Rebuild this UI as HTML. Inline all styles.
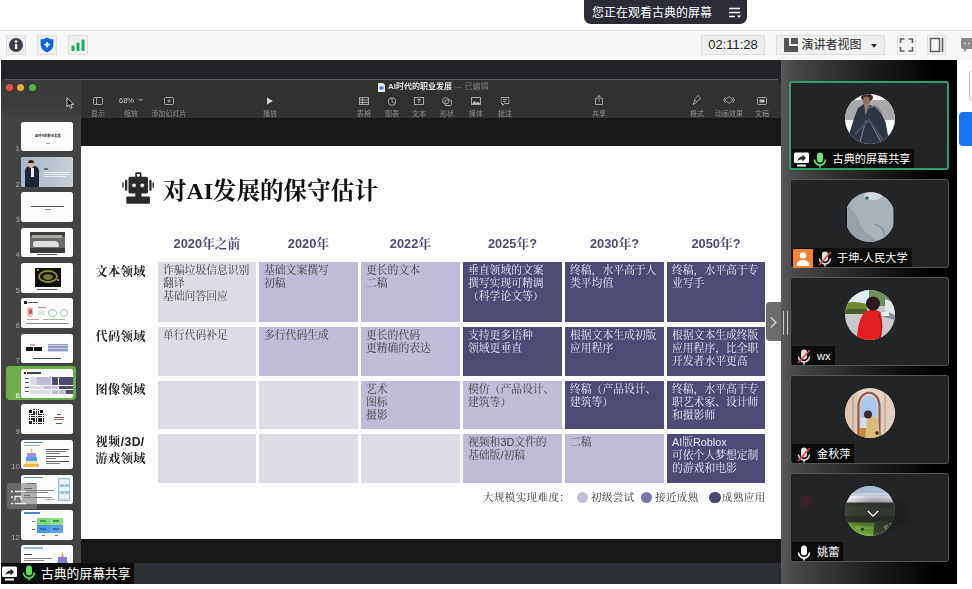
<!DOCTYPE html>
<html lang="zh">
<head>
<meta charset="utf-8">
<title>会议</title>
<style>
*{box-sizing:border-box;margin:0;padding:0}
html,body{width:972px;height:589px;overflow:hidden;background:#fff}
body{position:relative;font-family:"Liberation Sans","Noto Sans CJK SC",sans-serif;color:#222}
.abs{position:absolute}
/* top */
#pill{left:584px;top:0;width:163px;height:24px;background:#2b2c37;border-radius:0 0 7px 7px;color:#fff;font-size:12px;line-height:27px;padding-left:8px;white-space:nowrap}
#bar{left:0;top:30px;width:972px;height:30px;background:#f8f8f8;border-top:1px solid #dcdcdc}
.tbtn{position:absolute;top:35px;height:20px;background:#f0f0f0;border:1px solid #dedede}
/* main dark */
#dark{left:1px;top:60px;width:956px;height:524px;background:#222326}
#rpanel{left:781px;top:60px;width:176px;height:524px;background:linear-gradient(90deg,#5a5858 0,#4a4949 8%,#363636 25%,#1b1b1b 55%,#000 88%)}
.tile{position:absolute;left:790px;width:159px;height:89px;background:#222426;border:1px solid #555;border-radius:3px}
.av{position:absolute;left:54px;top:12px;width:50px;height:50px;border-radius:50%;overflow:hidden}
.nm{position:absolute;left:1px;bottom:1px;height:19px;background:rgba(8,8,8,.85);color:#fff;font-size:11.150px;line-height:17px;white-space:nowrap;padding:2px 4px 0 2px;display:flex;align-items:center}
/* keynote */
#kn{left:1px;top:79px;width:780px;height:486px;background:#181818;border-radius:5px 5px 0 0;overflow:hidden}
#kntb{left:80px;top:0;width:700px;height:39px;background:#313130;border-top:1px solid #5c5c5c}
#side{left:0;top:0;width:80px;height:486px;background:#444343;box-shadow:inset 0 1px 0 #5a5a5a}
.th{position:absolute;left:20px;width:52px;height:29.500px;background:#fcfcfc;border-radius:2.500px;overflow:hidden}
.tn{position:absolute;left:0;width:19px;text-align:right;color:#c4c4c4;font-size:8px;line-height:9px;filter:blur(.3px)}
.ti{position:absolute;top:30px;color:#8d8d8d;font-size:7px;line-height:8px;white-space:nowrap;transform:translateX(-50%);filter:blur(.4px)}
.ic{position:absolute;top:17px;transform:translateX(-50%)}
#slide{left:80px;top:67px;width:700px;height:393px;background:#fdfdfd;overflow:hidden}
#slide>*{filter:blur(.35px)}
.kai{font-family:"Liberation Serif","Noto Serif CJK SC",serif}
.cell{position:absolute;font-family:"Liberation Sans","Noto Serif CJK SC",serif;font-size:10.800px;line-height:13.200px;padding:2px 0 0 5px;white-space:nowrap;color:#444;overflow:hidden}
.c0{background:#dcdce5}.c1{background:#d3d2e2}.c2{background:#bebcd6}.c3{background:#4d4b76;color:#e8e8f2}
.hd{position:absolute;width:99px;text-align:center;font:bold 12.800px/14px "Liberation Sans","Noto Serif CJK SC",sans-serif;color:#4c4a73;white-space:nowrap}
.rl{position:absolute;left:14.500px;letter-spacing:.4px;font-family:"Liberation Sans","Noto Serif CJK SC",serif;font-weight:700;font-size:12.200px;line-height:17px;color:#222;white-space:nowrap}
</style>
</head>
<body>
<!-- top pill -->
<div id="pill" class="abs">您正在观看古典的屏幕
<svg class="abs" style="left:145px;top:7px" width="14" height="12" viewBox="0 0 14 12"><path d="M0 1.5h11M0 5.5h11M0 9.5h6" stroke="#fff" stroke-width="1.4" fill="none"/><path d="M8 8.5h4l-2 2.6z" fill="#fff"/></svg>
</div>
<div id="bar" class="abs"></div>
<!-- left toolbar icons -->
<div class="tbtn" style="left:6px;width:20px"><svg width="18" height="18" viewBox="0 0 18 18"><circle cx="9" cy="9" r="7" fill="#3c4148"/><rect x="8" y="8" width="2.2" height="5" fill="#fff"/><circle cx="9.1" cy="5.6" r="1.3" fill="#fff"/></svg></div>
<div class="tbtn" style="left:37px;width:20px"><svg width="18" height="18" viewBox="0 0 18 18"><path d="M9 1.5c2 1.3 4.2 1.8 6.4 1.8v5.200c0 3.600-2.600 6.300-6.400 8c-3.800-1.700-6.400-4.400-6.400-8V3.300C4.800 3.300 7 2.800 9 1.500z" fill="#1466e0"/><path d="M9 6v5.400M6.300 8.700h5.400" stroke="#fff" stroke-width="1.700"/></svg></div>
<div class="tbtn" style="left:68px;width:20px"><svg width="18" height="18" viewBox="0 0 18 18"><rect x="2.500" y="9.500" width="3" height="5.500" rx="1" fill="#1faa63"/><rect x="7.500" y="6.500" width="3" height="8.500" rx="1" fill="#1faa63"/><rect x="12.500" y="3.500" width="3" height="11.500" rx="1" fill="#1faa63"/></svg></div>
<!-- right toolbar -->
<div class="tbtn" style="left:701px;width:64px;font-size:13px;line-height:18px;text-align:center;color:#222">02:11:28</div>
<div class="tbtn" style="left:776px;width:109px;font-size:12px;line-height:18px;color:#2a2a2a;padding-left:24.500px;white-space:nowrap">演讲者视图
<svg class="abs" style="left:7px;top:2px" width="14" height="14" viewBox="0 0 14 14"><path d="M0 0h5v8h9v6H0z" fill="#555"/><rect x="7" y="0" width="7" height="6" fill="#555"/></svg>
<svg class="abs" style="left:94px;top:7.500px" width="6" height="4" viewBox="0 0 6 4"><path d="M0 0h6L3 4z" fill="#333"/></svg>
</div>
<svg class="abs" style="left:897px;top:35px" width="19" height="20" viewBox="0 0 19 20"><rect x=".5" y=".5" width="18" height="19" fill="#f4f4f4" stroke="#e2e2e2"/><path d="M3.500 8V4h4M11.500 4h4v4M15.500 12v4h-4M7.500 16h-4v-4" stroke="#606060" stroke-width="1.600" fill="none"/></svg>
<svg class="abs" style="left:927px;top:35px" width="19" height="20" viewBox="0 0 19 20"><rect x=".5" y=".5" width="18" height="19" fill="#f4f4f4" stroke="#e2e2e2"/><rect x="3.500" y="3.500" width="9" height="13" fill="none" stroke="#606060" stroke-width="1.500"/><path d="M15.500 3v14" stroke="#606060" stroke-width="1.600"/></svg>
<svg class="abs" style="left:961px;top:38px" width="11" height="16" viewBox="0 0 11 16"><path d="M2 0h9v11H6l-3 3v-3H2a2 2 0 0 1-2-2V2a2 2 0 0 1 2-2z" fill="#8a8a8a"/><circle cx="4" cy="5.500" r="1" fill="#ddd"/><circle cx="8" cy="5.500" r="1" fill="#ddd"/></svg>
<div class="abs" style="left:969px;top:70px;width:8px;height:31px;border:1px solid #bbb;border-radius:4px;background:#fff"></div>
<div class="abs" style="left:959px;top:112px;width:20px;height:34px;border-radius:4px;background:#1a73f0"></div>

<div id="dark" class="abs"></div>
<div id="rpanel" class="abs"></div>
<div class="abs" style="left:783px;top:311px;width:1px;height:24px;background:#c9c3c3"></div><div class="abs" style="left:786.500px;top:311px;width:1px;height:24px;background:#c9c3c3"></div>
<div class="tile" style="top:81px;left:789px;width:160px;border:2px solid #2ca06a"><div class="av" style="left:54px;top:11px"><svg width="50" height="50" viewBox="0 0 50 50"><rect width="50" height="50" fill="#fafafa"/><rect y="6" width="50" height="20" fill="#a9a9ab"/><ellipse cx="22" cy="3.500" rx="6" ry="4" fill="#3d2c29"/><ellipse cx="21.500" cy="7" rx="3.400" ry="4.500" fill="#8b6f62"/><path d="M18 10h7l-2 15h-4z" fill="#8d8273"/><path d="M13 14l6-4 1.500 11 4-10 9 3 7 14 4 22H6l-1.500-11 5-16z" fill="#2e3441"/><path d="M24 14l6-2 7 8M21 26l-6 22M24 26l12 22" stroke="#707a88" stroke-width="1.200" fill="none"/><path d="M10 40l14-14 14 20" stroke="#4a5363" stroke-width="2" fill="none"/></svg></div><div class="nm" style="left:1px;bottom:0;height:19.500px;padding-top:2.500px"><svg width="15" height="15" viewBox="0 0 15 15" style="margin:0 4px 0 0"><rect x="0" y="0.500" width="15" height="10.500" rx="1.500" fill="#fff"/><rect x="3" y="12.500" width="9" height="2" rx=".5" fill="#fff"/><path d="M3.500 9c.5-3 2.500-4.500 5-4.500V2.500L12 6 8.500 9.500V7.500C6.500 7.500 5 7.800 3.500 9z" fill="#222"/></svg><svg width="14" height="16" viewBox="0 0 14 16" style="margin-right:5.500px"><rect x="4" y="0.500" width="6" height="10" rx="3" fill="#6fe27a"/><path d="M1.500 7.500a5.500 5.500 0 0 0 11 0" stroke="#6fe27a" stroke-width="1.600" fill="none"/><path d="M7 13v2.500" stroke="#6fe27a" stroke-width="1.600"/></svg>古典的屏幕共享</div></div>
<div class="tile" style="top:179px;border:1px solid #555"><div class="av" style="left:54px;top:12px"><svg width="50" height="50" viewBox="0 0 50 50"><rect width="50" height="50" fill="#17181a"/><rect x="2" y="0" width="46.500" height="50" fill="#a9b1b9"/><ellipse cx="28" cy="4" rx="9" ry="4" fill="#d5d8dc"/><path d="M2 14c8 4 10 12 14 20s10 10 18 16H2z" fill="#98a1aa"/><path d="M30 32c6 2 10 6 10 14" stroke="#8c959e" stroke-width="1.500" fill="none"/><circle cx="22" cy="6" r="1.800" fill="#2f6f78"/></svg></div><div class="nm" style="left:1px;bottom:0"><svg width="20" height="19" viewBox="0 0 20 19" style="margin:0 2px 0 -1px"><rect width="20" height="19" fill="#f08332"/><circle cx="10" cy="6.500" r="3.200" fill="#fff"/><path d="M3.500 17c0-4 3-6 6.500-6s6.500 2 6.500 6z" fill="#fff"/></svg><svg width="16" height="16" viewBox="0 0 16 16" style="margin:0 4px 0 2px"><rect x="5" y="0.500" width="6" height="10" rx="3" fill="#ddd"/><path d="M2.500 7.500a5.500 5.500 0 0 0 11 0" stroke="#ddd" stroke-width="1.500" fill="none"/><path d="M8 13v2.500" stroke="#ddd" stroke-width="1.500"/><path d="M14 1L2 14" stroke="#e0434d" stroke-width="1.600"/></svg>于坤-人民大学</div></div>
<div class="tile" style="top:277px;border:1px solid #555"><div class="av" style="left:54px;top:12px"><svg width="50" height="50" viewBox="0 0 50 50"><rect width="50" height="50" fill="#c9c9ce"/><rect width="26" height="16" fill="#dfeaf2"/><path d="M0 14c6-3 14-2 22 0v10H0z" fill="#6f8c34"/><path d="M0 19h22v5H0z" fill="#46602a"/><path d="M24 0h20c4 4 6 10 6 16H24z" fill="#6f8f5a"/><path d="M40 9l10 4v14H40z" fill="#e4e6ea"/><path d="M35 22c5-1 10 0 15 3v5c-5-1-10-3-15-4z" fill="#8c9096"/><path d="M36 22h8v4h-8z" fill="#e8e8ea"/><path d="M12 50c0-10 2-22 8-28 4-3 12-3 15 0 3 8 3 18 0 28z" fill="#e3201d"/><path d="M34 24c3 8 3 18 0 26" stroke="#b91512" stroke-width="1.500" fill="none"/><circle cx="28" cy="13.500" r="7" fill="#2b1a1b"/></svg></div><div class="nm" style="left:1px;bottom:0"><svg width="16" height="16" viewBox="0 0 16 16" style="margin:0 5px 0 2px"><rect x="5" y="0.500" width="6" height="10" rx="3" fill="#ddd"/><path d="M2.500 7.500a5.500 5.500 0 0 0 11 0" stroke="#ddd" stroke-width="1.500" fill="none"/><path d="M8 13v2.500" stroke="#ddd" stroke-width="1.500"/><path d="M14 1L2 14" stroke="#e0434d" stroke-width="1.600"/></svg>wx</div></div>
<div class="tile" style="top:375px;border:1px solid #555"><div class="av" style="left:54px;top:12px"><svg width="50" height="50" viewBox="0 0 50 50"><rect width="50" height="50" fill="#e6d5c9"/><path d="M0 0h13v50H0z" fill="#dcc6b8"/><path d="M36 0h14v50H36z" fill="#e2cfc2"/><path d="M13.500 50V19c0-19 21-19 21 0v31" stroke="#8d5a4c" stroke-width="2.200" fill="none"/><path d="M15.500 40V19c0-15 17-15 17 0v21z" fill="#a9c9ea"/><path d="M15.500 30h17v10h-17z" fill="#d3e2f0"/><path d="M40 4v44M8 8v40" stroke="#b99284" stroke-width="1"/><rect x="14" y="40" width="8" height="10" fill="#c48d3e"/><path d="M20 50l2-18c2-4 9-5 11 0l2 18z" fill="#d9bb7e"/><circle cx="23" cy="26.500" r="4" fill="#3c2b33"/><circle cx="32" cy="45" r="1.800" fill="#3a2a22"/></svg></div><div class="nm" style="left:1px;bottom:0"><svg width="16" height="16" viewBox="0 0 16 16" style="margin:0 5px 0 2px"><rect x="5" y="0.500" width="6" height="10" rx="3" fill="#ddd"/><path d="M2.500 7.500a5.500 5.500 0 0 0 11 0" stroke="#ddd" stroke-width="1.500" fill="none"/><path d="M8 13v2.500" stroke="#ddd" stroke-width="1.500"/><path d="M14 1L2 14" stroke="#e0434d" stroke-width="1.600"/></svg>金秋萍</div></div>
<div class="tile" style="top:473px;border:1px solid #555"><div class="av" style="left:54px;top:12px"><svg width="50" height="50" viewBox="0 0 50 50"><rect width="50" height="50" fill="#e9e9f0"/><rect width="50" height="7" fill="#a9b9d2"/><rect y="7" width="50" height="3" fill="#c9d2e2"/><rect y="16.500" width="50" height="20" fill="#3d433a"/><path d="M0 22c10-3 26-3 50 2v8H0z" fill="#4b5342"/><rect y="30" width="50" height="7" fill="#363c30"/><path d="M0 36.500h32l-3 13.500H6z" fill="#6dab3a"/><path d="M10 40h18v3H10z" fill="#8bc653"/><path d="M30 36c6-2 12 0 16 2l-6 12H28z" fill="#3d4a32"/><path d="M38 40l6-2-3 6z" fill="#8c9488"/><rect x="16" y="42" width="3" height="2.500" fill="#2f4a22"/></svg></div><div class="abs" style="left:46px;top:20px;width:80px;height:40px;background:radial-gradient(ellipse at center,rgba(20,20,20,.5) 0,rgba(20,20,20,.35) 45%,rgba(20,20,20,0) 72%)"></div><svg class="abs" style="left:75.500px;top:35.500px" width="12" height="8" viewBox="0 0 12 8"><path d="M.8 1l5.200 5.200L11.200 1" stroke="#fff" stroke-width="1.300" fill="none"/></svg><div class="abs" style="left:6px;top:18px;width:18px;height:18px;background:radial-gradient(circle,rgba(120,30,40,.45) 0,rgba(120,30,40,0) 70%)"></div><div class="nm" style="left:1px;bottom:0"><svg width="14" height="16" viewBox="0 0 14 16" style="margin:0 6px 0 3px"><rect x="4" y="0.500" width="6" height="10" rx="3" fill="#fff"/><path d="M1.500 7.500a5.500 5.500 0 0 0 11 0" stroke="#fff" stroke-width="1.600" fill="none"/><path d="M7 13v2.500" stroke="#fff" stroke-width="1.600"/></svg>姚蕾</div></div>
<div id="kn" class="abs">
<div id="side" class="abs"><div class="abs" style="left:0;top:1px;width:80px;height:38px;background:linear-gradient(#3a3a3a 0,#3c3c3c 70%,#444343 100%)"></div>
<div class="abs" style="left:5px;top:5px;width:7px;height:7px;border-radius:50%;background:#e8534e"></div><div class="abs" style="left:16px;top:5px;width:7px;height:7px;border-radius:50%;background:#e3ab3a"></div><div class="abs" style="left:28px;top:5px;width:7px;height:7px;border-radius:50%;background:#55b63f"></div>
<svg class="abs" style="left:65px;top:18px" width="9" height="12" viewBox="0 0 9 12"><path d="M1 .8v9l2.200-2 1.500 3.500 1.500-.700-1.500-3.300h3z" fill="#111" stroke="#eee" stroke-width=".8"/></svg>
<div class="th" style="top:42.8px"><div class="abs" style="left:13.5px;top:12px;font-size:10px;line-height:10px;white-space:nowrap;color:#222;font-weight:bold;transform:scale(0.32);transform-origin:0 0">AI时代的职业发展</div><div class="abs" style="left:25px;top:21px;width:4px;height:0.8px;background:#aaa"></div></div>
<div class="tn" style="top:65.4px;color:#aaa">1</div>
<div class="th" style="top:78.1px"><div class="abs" style="left:0px;top:0px;width:52px;height:30px;background:linear-gradient(90deg,#a7b7c7,#c9cfd6)"></div><div class="abs" style="left:4px;top:9px;width:14px;height:21px;background:#1f2636;border-radius:5px 5px 0 0"></div><div class="abs" style="left:9.5px;top:11px;width:3px;height:9px;background:#e8e8ee"></div><div class="abs" style="left:7px;top:3px;width:6px;height:7.5px;background:#d8b39a;border-radius:50%"></div><div class="abs" style="left:7px;top:2.5px;width:6px;height:3px;background:#2a2020;border-radius:3px 3px 0 0"></div><div class="abs" style="left:23px;top:11px;width:4px;height:1.5px;background:#5a6a7a"></div><div class="abs" style="left:23px;top:14.5px;width:25px;height:0.8px;background:#e6ebf0"></div><div class="abs" style="left:23px;top:16.5px;width:25px;height:0.8px;background:#e6ebf0"></div><div class="abs" style="left:23px;top:18.5px;width:22px;height:0.8px;background:#e6ebf0"></div></div>
<div class="tn" style="top:100.7px;color:#aaa">2</div>
<div class="th" style="top:113.4px"><div class="abs" style="left:10px;top:13.5px;width:33px;height:1.3px;background:#555"></div><div class="abs" style="left:23.5px;top:17px;width:6px;height:1px;background:#888"></div></div>
<div class="tn" style="top:136.0px;color:#aaa">3</div>
<div class="th" style="top:148.8px"><div class="abs" style="left:9px;top:4px;width:35px;height:21px;background:#6b6b69"></div><div class="abs" style="left:9px;top:4px;width:35px;height:4px;background:#3e3e3d"></div><div class="abs" style="left:11px;top:7px;width:30px;height:3px;background:#a9a9a6"></div><div class="abs" style="left:12px;top:13px;width:26px;height:6px;background:#dedede;border-radius:3px 6px 2px 2px"></div><div class="abs" style="left:9px;top:20px;width:35px;height:5px;background:#3a3a39"></div><div class="abs" style="left:16px;top:26px;width:20px;height:1.2px;background:#555"></div></div>
<div class="tn" style="top:171.4px;color:#aaa">4</div>
<div class="th" style="top:184.0px"><div class="abs" style="left:14px;top:4.5px;width:26px;height:19px;background:#0f100c"></div><div class="abs" style="left:17px;top:7px;width:20px;height:13px;background:transparent;border-radius:50%;border:2.500px solid #8f8a35"></div><div class="abs" style="left:22px;top:11px;width:10px;height:6px;background:#6f7a2c;border-radius:50%"></div><div class="abs" style="left:16px;top:6px;width:2px;height:2px;background:#c9c24a;border-radius:50%"></div><div class="abs" style="left:36px;top:16px;width:2px;height:2px;background:#c9c24a;border-radius:50%"></div><div class="abs" style="left:16px;top:25.5px;width:20px;height:1.2px;background:#555"></div></div>
<div class="tn" style="top:206.6px;color:#aaa">5</div>
<div class="th" style="top:219.3px"><div class="abs" style="left:3px;top:3px;width:2.5px;height:2.5px;background:#222"></div><div class="abs" style="left:6.5px;top:3.5px;width:10px;height:1.5px;background:#555"></div><div class="abs" style="left:6px;top:9px;width:6px;height:10px;background:#e9b9c0;border-radius:3px"></div><div class="abs" style="left:7.5px;top:11px;width:3px;height:5px;background:#d8485a;border-radius:2px"></div><div class="abs" style="left:17px;top:9px;width:8px;height:1px;background:#b88"></div><div class="abs" style="left:17px;top:13px;width:7px;height:4px;background:#d7e6d7"></div><div class="abs" style="left:27px;top:11px;width:9px;height:8px;background:transparent;border:1px solid #9cc7a9;border-radius:50%"></div><div class="abs" style="left:39px;top:11px;width:8px;height:8px;background:transparent;border:1px solid #9cc7a9;border-radius:4px"></div><div class="abs" style="left:5px;top:24.5px;width:43px;height:1px;background:#8a8a8a"></div><div class="abs" style="left:6px;top:21px;width:12px;height:1px;background:#c99"></div><div class="abs" style="left:22px;top:21px;width:22px;height:1px;background:#9b9"></div></div>
<div class="tn" style="top:241.9px;color:#aaa">6</div>
<div class="th" style="top:254.6px"><div class="abs" style="left:9px;top:10px;width:5px;height:2.5px;background:#d9a9b0"></div><div class="abs" style="left:5px;top:13px;width:7px;height:4px;background:#15151a"></div><div class="abs" style="left:13px;top:13px;width:8px;height:4px;background:#15151a"></div><div class="abs" style="left:27px;top:10px;width:20px;height:8.5px;background:#8e9cc4;background-image:repeating-linear-gradient(0deg,rgba(255,255,255,.55) 0 1px,transparent 1px 2.800px)"></div><div class="abs" style="left:12px;top:24px;width:28px;height:1.2px;background:#444"></div></div>
<div class="tn" style="top:277.2px;color:#aaa">7</div>
<div class="abs" style="left:4.500px;top:286.500px;width:70px;height:34.500px;background:#6dad4c;border-radius:4px"></div>
<div class="th" style="top:289.8px"><div class="abs" style="left:3px;top:3px;width:2px;height:2.5px;background:#222"></div><div class="abs" style="left:6px;top:3.5px;width:14px;height:1.5px;background:#444"></div><div class="abs" style="left:9.0px;top:8.5px;width:6.8px;height:3.8px;background:#dcdce5"></div><div class="abs" style="left:16.2px;top:8.5px;width:6.8px;height:3.8px;background:#bebcd6"></div><div class="abs" style="left:23.4px;top:8.5px;width:6.8px;height:3.8px;background:#bebcd6"></div><div class="abs" style="left:30.6px;top:8.5px;width:6.8px;height:3.8px;background:#4d4b76"></div><div class="abs" style="left:37.8px;top:8.5px;width:6.8px;height:3.8px;background:#4d4b76"></div><div class="abs" style="left:45.0px;top:8.5px;width:6.8px;height:3.8px;background:#4d4b76"></div><div class="abs" style="left:3.5px;top:9.5px;width:4px;height:1px;background:#555"></div><div class="abs" style="left:9.0px;top:12.7px;width:6.8px;height:3.8px;background:#dcdce5"></div><div class="abs" style="left:16.2px;top:12.7px;width:6.8px;height:3.8px;background:#bebcd6"></div><div class="abs" style="left:23.4px;top:12.7px;width:6.8px;height:3.8px;background:#bebcd6"></div><div class="abs" style="left:30.6px;top:12.7px;width:6.8px;height:3.8px;background:#4d4b76"></div><div class="abs" style="left:37.8px;top:12.7px;width:6.8px;height:3.8px;background:#4d4b76"></div><div class="abs" style="left:45.0px;top:12.7px;width:6.8px;height:3.8px;background:#4d4b76"></div><div class="abs" style="left:3.5px;top:13.7px;width:4px;height:1px;background:#555"></div><div class="abs" style="left:9.0px;top:16.9px;width:6.8px;height:3.8px;background:#dcdce5"></div><div class="abs" style="left:16.2px;top:16.9px;width:6.8px;height:3.8px;background:#dcdce5"></div><div class="abs" style="left:23.4px;top:16.9px;width:6.8px;height:3.8px;background:#bebcd6"></div><div class="abs" style="left:30.6px;top:16.9px;width:6.8px;height:3.8px;background:#bebcd6"></div><div class="abs" style="left:37.8px;top:16.9px;width:6.8px;height:3.8px;background:#4d4b76"></div><div class="abs" style="left:45.0px;top:16.9px;width:6.8px;height:3.8px;background:#4d4b76"></div><div class="abs" style="left:3.5px;top:17.9px;width:4px;height:1px;background:#555"></div><div class="abs" style="left:9.0px;top:21.1px;width:6.8px;height:3.8px;background:#dcdce5"></div><div class="abs" style="left:16.2px;top:21.1px;width:6.8px;height:3.8px;background:#dcdce5"></div><div class="abs" style="left:23.4px;top:21.1px;width:6.8px;height:3.8px;background:#dcdce5"></div><div class="abs" style="left:30.6px;top:21.1px;width:6.8px;height:3.8px;background:#bebcd6"></div><div class="abs" style="left:37.8px;top:21.1px;width:6.8px;height:3.8px;background:#bebcd6"></div><div class="abs" style="left:45.0px;top:21.1px;width:6.8px;height:3.8px;background:#4d4b76"></div><div class="abs" style="left:3.5px;top:22.1px;width:4px;height:1px;background:#555"></div></div>
<div class="tn" style="top:312.4px;color:#fff">8</div>
<div class="th" style="top:325.2px"><div class="abs" style="left:7px;top:5px;width:16px;height:16px;background:#222;background-image:repeating-linear-gradient(90deg,#fff 0 .8px,transparent .8px 2.300px),repeating-linear-gradient(0deg,#fff 0 .8px,transparent .8px 2.300px)"></div><div class="abs" style="left:7px;top:5px;width:5px;height:5px;background:#111;border:1px solid #fff"></div><div class="abs" style="left:18px;top:5px;width:5px;height:5px;background:#111;border:1px solid #fff"></div><div class="abs" style="left:7px;top:16px;width:5px;height:5px;background:#111;border:1px solid #fff"></div><div class="abs" style="left:36px;top:9.5px;width:4px;height:1px;background:#555"></div><div class="abs" style="left:33px;top:13px;width:10px;height:0.9px;background:#666"></div><div class="abs" style="left:33px;top:15px;width:10px;height:0.9px;background:#c55"></div><div class="abs" style="left:35px;top:19px;width:6px;height:1px;background:#555"></div></div>
<div class="tn" style="top:347.8px;color:#aaa">9</div>
<div class="th" style="top:360.5px"><div class="abs" style="left:3px;top:2px;width:19px;height:1.6px;background:#4f86c9"></div><div class="abs" style="left:3px;top:5.5px;width:16px;height:0.8px;background:#9ab"></div><div class="abs" style="left:9px;top:8px;width:3px;height:5px;background:#e9c84a;clip-path:polygon(50% 0,100% 100%,0 100%)"></div><div class="abs" style="left:6px;top:13px;width:9px;height:4px;background:#a98ae0"></div><div class="abs" style="left:5px;top:17px;width:11px;height:4px;background:#5a9ae8"></div><div class="abs" style="left:4px;top:21px;width:13px;height:3px;background:#f3e2a6"></div><div class="abs" style="left:3px;top:24px;width:15px;height:3px;background:#e9b84a"></div><div class="abs" style="left:25px;top:9px;width:23px;height:0.9px;background:#555"></div><div class="abs" style="left:25px;top:11px;width:20px;height:0.9px;background:#777"></div><div class="abs" style="left:25px;top:13px;width:14px;height:0.9px;background:#777"></div><div class="abs" style="left:25px;top:16.5px;width:23px;height:0.9px;background:#555"></div><div class="abs" style="left:25px;top:18.5px;width:10px;height:0.9px;background:#777"></div><div class="abs" style="left:25px;top:21.5px;width:23px;height:0.9px;background:#555"></div><div class="abs" style="left:25px;top:23.5px;width:14px;height:0.9px;background:#777"></div></div>
<div class="tn" style="top:383.1px;color:#aaa">10</div>
<div class="th" style="top:395.8px"><div class="abs" style="left:3px;top:2px;width:19px;height:1.6px;background:#4f86c9"></div><div class="abs" style="left:37px;top:3px;width:12px;height:23px;background:#d5e7f3;border:.8px solid #9db9cc"></div><div class="abs" style="left:39px;top:5px;width:3.5px;height:18px;background:#f4f8fb"></div><div class="abs" style="left:44px;top:5px;width:3.5px;height:18px;background:#f4f8fb"></div><div class="abs" style="left:39px;top:9px;width:3.5px;height:3px;background:#9cc3dd"></div><div class="abs" style="left:44px;top:9px;width:3.5px;height:3px;background:#9cc3dd"></div><div class="abs" style="left:39px;top:16px;width:3.5px;height:3px;background:#9cc3dd"></div><div class="abs" style="left:44px;top:16px;width:3.5px;height:3px;background:#9cc3dd"></div><div class="abs" style="left:5px;top:8px;width:10px;height:1px;background:#555"></div><div class="abs" style="left:3px;top:13px;width:8px;height:1px;background:#444"></div><div class="abs" style="left:3px;top:15px;width:30px;height:0.9px;background:#888"></div><div class="abs" style="left:3px;top:17px;width:24px;height:0.9px;background:#888"></div><div class="abs" style="left:3px;top:20px;width:6px;height:1px;background:#444"></div><div class="abs" style="left:3px;top:22px;width:28px;height:0.9px;background:#888"></div><div class="abs" style="left:24px;top:24px;width:10px;height:0.8px;background:#aaa"></div></div>
<div class="tn" style="top:418.4px;color:#aaa">11</div>
<div class="th" style="top:431.1px"><div class="abs" style="left:3px;top:2px;width:16px;height:1.6px;background:#4f86c9"></div><div class="abs" style="left:16px;top:7.5px;width:13px;height:7.5px;background:#7fd97c"></div><div class="abs" style="left:29.3px;top:7.5px;width:12.5px;height:7.5px;background:#8fe08a"></div><div class="abs" style="left:16px;top:15.3px;width:13px;height:7.5px;background:#4a97e6"></div><div class="abs" style="left:29.3px;top:15.3px;width:12.5px;height:7.5px;background:#5aa5ee"></div><div class="abs" style="left:19px;top:10px;width:6px;height:1.5px;background:#3a9a4a"></div><div class="abs" style="left:32px;top:10px;width:6px;height:1.5px;background:#3a9a4a"></div><div class="abs" style="left:19px;top:18px;width:6px;height:1.5px;background:#2a67b6"></div><div class="abs" style="left:32px;top:18px;width:6px;height:1.5px;background:#2a67b6"></div><div class="abs" style="left:11px;top:11px;width:3px;height:0.9px;background:#777"></div><div class="abs" style="left:11px;top:19px;width:3px;height:0.9px;background:#777"></div><div class="abs" style="left:21px;top:25px;width:3px;height:0.9px;background:#777"></div><div class="abs" style="left:34px;top:25px;width:3px;height:0.9px;background:#777"></div></div>
<div class="tn" style="top:453.7px;color:#aaa">12</div>
<div class="th" style="top:466.4px"><div class="abs" style="left:3px;top:2px;width:19px;height:1.6px;background:#8fb6e4"></div><div class="abs" style="left:3px;top:9px;width:8px;height:1px;background:#444"></div><div class="abs" style="left:3px;top:12.5px;width:28px;height:0.9px;background:#888"></div><div class="abs" style="left:3px;top:15px;width:20px;height:0.9px;background:#888"></div><div class="abs" style="left:40px;top:6px;width:3px;height:6px;background:#e9a84a;clip-path:polygon(50% 0,100% 100%,0 100%)"></div><div class="abs" style="left:37px;top:12px;width:9px;height:5px;background:#8a7ae0"></div><div class="abs" style="left:36px;top:17px;width:11px;height:13px;background:#5a8ae8"></div></div>
<div class="tn" style="top:489.0px;color:#aaa">13</div>
<div class="abs" style="left:6px;top:404px;width:30px;height:26px;border-radius:2px;background:rgba(128,128,128,.62)"></div><svg class="abs" style="left:9px;top:410px" width="20" height="16" viewBox="0 0 20 16"><path d="M1 2.500h2M5 2.500h11M1 8h2M1 14.500h2M5 14.500h11" stroke="#e8e8e8" stroke-width="1.500"/><path d="M5 11.500v-4h6v4" stroke="#e8e8e8" stroke-width="1.300" fill="none"/></svg>
</div>
<div id="kntb" class="abs">
<svg class="abs" style="left:297px;top:3px" width="7" height="9" viewBox="0 0 7 9"><path d="M0 0h5l2 2v7H0z" fill="#e8eef8"/><rect x="1.500" y="3.500" width="4" height="3" fill="#3b7fd6"/></svg>
<div class="abs" style="left:307px;top:2px;font-size:8px;line-height:10px;color:#e0e0e0;white-space:nowrap;font-weight:bold;filter:blur(.3px)">AI时代的职业发展 <span style="color:#7d7d7d;font-weight:normal">— 已编辑</span></div>
<svg class="ic" style="left:17px" width="10" height="8" viewBox="0 0 10 8"><rect x=".5" y=".5" width="9" height="7" rx="1" stroke="#b0b0b0" stroke-width=".9" fill="none"/><path d="M3.500 .5v7" stroke="#b0b0b0" stroke-width=".9" fill="none"/></svg><div class="ti" style="left:17px">显示</div>
<div class="abs" style="left:38px;top:16px;font-size:7.500px;line-height:9px;color:#c8c8c8;white-space:nowrap;filter:blur(.3px)">68%<svg width="5" height="4" viewBox="0 0 5 4" style="margin-left:4px;vertical-align:1px"><path d="M.5 .8l2 2 2-2" stroke="#c8c8c8" stroke-width=".9" fill="none"/></svg></div><div class="ti" style="left:50px">缩放</div>
<svg class="ic" style="left:88px" width="10" height="8" viewBox="0 0 10 8"><rect x=".5" y=".5" width="9" height="7" rx="1" stroke="#b0b0b0" stroke-width=".9" fill="none"/><path d="M5 2.500v3M3.500 4h3" stroke="#b0b0b0" stroke-width=".9" fill="none"/></svg><div class="ti" style="left:88px">添加幻灯片</div>
<svg class="ic" style="left:189px" width="7" height="8" viewBox="0 0 7 8"><path d="M.5 .5l6 3.500-6 3.500z" fill="#cfcfcf"/></svg><div class="ti" style="left:189px">播放</div>
<svg class="ic" style="left:283px" width="10" height="8" viewBox="0 0 10 8"><rect x=".5" y=".5" width="9" height="7" stroke="#b0b0b0" stroke-width=".9" fill="none"/><path d="M.5 3h9M.5 5.500h9M3.500 .5v7" stroke="#b0b0b0" stroke-width=".9" fill="none"/></svg><div class="ti" style="left:283px">表格</div>
<svg class="ic" style="left:311px" width="9" height="9" viewBox="0 0 9 9"><circle cx="4.500" cy="4.500" r="3.800" stroke="#b0b0b0" stroke-width=".9" fill="none"/><path d="M4.500 .7v3.800l3 2" stroke="#b0b0b0" stroke-width=".9" fill="none"/></svg><div class="ti" style="left:311px">图表</div>
<svg class="ic" style="left:338px" width="10" height="8" viewBox="0 0 10 8"><rect x=".5" y=".5" width="9" height="7" stroke="#b0b0b0" stroke-width=".9" fill="none"/><path d="M3 2.500h4M5 2.500v3.500" stroke="#b0b0b0" stroke-width=".9" fill="none"/></svg><div class="ti" style="left:338px">文本</div>
<svg class="ic" style="left:366px" width="10" height="9" viewBox="0 0 10 9"><rect x="3" y="3" width="6.500" height="5.500" rx="1" stroke="#b0b0b0" stroke-width=".9" fill="none"/><circle cx="3.800" cy="3.800" r="3.200" stroke="#b0b0b0" stroke-width=".9" fill="none"/></svg><div class="ti" style="left:366px">形状</div>
<svg class="ic" style="left:395px" width="10" height="8" viewBox="0 0 10 8"><rect x=".5" y=".5" width="9" height="7" stroke="#b0b0b0" stroke-width=".9" fill="none"/><path d="M1 7l2.500-3 2 2 1.500-1.500 2.500 2.500z" fill="#bdbdbd"/></svg><div class="ti" style="left:395px">媒体</div>
<svg class="ic" style="left:424px" width="9" height="9" viewBox="0 0 9 9"><path d="M.5 .5h8v6h-4.500l-2 2v-2h-1.500z" stroke="#b0b0b0" stroke-width=".9" fill="none"/><path d="M2.500 2.500h4M2.500 4.500h3" stroke="#b0b0b0" stroke-width=".9" fill="none"/></svg><div class="ti" style="left:424px">批注</div>
<svg class="ic" style="left:518px;top:15px" width="8" height="10" viewBox="0 0 8 10"><path d="M2.500 3.500h-2v6h7v-6h-2M4 6.500v-6M2 2.500l2-2 2 2" stroke="#b0b0b0" stroke-width=".9" fill="none"/></svg><div class="ti" style="left:518px">共享</div>
<svg class="ic" style="left:616px;top:15px" width="9" height="10" viewBox="0 0 9 10"><path d="M5.500 .5l3 3-4.500 3-2-2zM2.500 5l-2 4.500 4-2.500" stroke="#b0b0b0" stroke-width=".9" fill="none"/></svg><div class="ti" style="left:616px">格式</div>
<svg class="ic" style="left:648px;top:16px" width="12" height="8" viewBox="0 0 12 8"><path d="M6 .5l4 3.500-4 3.500-4-3.500z" stroke="#b0b0b0" stroke-width=".9" fill="none"/><path d="M2.500 1l-2 3 2 3M9.500 1l2 3-2 3" stroke="#b0b0b0" stroke-width=".9" fill="none"/></svg><div class="ti" style="left:648px">动画效果</div>
<svg class="ic" style="left:681px" width="10" height="8" viewBox="0 0 10 8"><rect x=".5" y=".5" width="9" height="7" rx="1" stroke="#b0b0b0" stroke-width=".9" fill="none"/><rect x="2.500" y="2.500" width="5" height="3" fill="#bdbdbd"/></svg><div class="ti" style="left:681px">文稿</div>
</div>
<div id="slide" class="abs">
<svg class="abs" style="left:41px;top:26px" width="32" height="33" viewBox="0 0 32 33">
<rect x="13.300" y=".3" width="6.200" height="6" rx="1.300" fill="#2a2a2a"/><rect x="14.900" y="1.900" width="3" height="2.800" rx=".5" fill="#fff"/>
<rect x="6.500" y="4.700" width="19.500" height="16.800" rx="1.600" fill="#2a2a2a"/>
<circle cx="12" cy="13.300" r="1.900" fill="#fff"/><circle cx="20.300" cy="13.300" r="1.900" fill="#fff"/>
<rect x="3" y="7.800" width="2.300" height="11.100" rx="1.100" fill="#2a2a2a"/><rect x=".3" y="10.200" width="1.400" height="5.800" rx=".7" fill="#2a2a2a"/>
<rect x="27.300" y="7.800" width="2.300" height="11.100" rx="1.100" fill="#2a2a2a"/><rect x="30.500" y="10.200" width="1.400" height="5.800" rx=".7" fill="#2a2a2a"/>
<rect x="13.300" y="21" width="6.200" height="4" fill="#2a2a2a"/>
<rect x="4.300" y="24.400" width="23.700" height="7.400" rx="1" fill="#2a2a2a"/>
</svg>
<div class="abs kai" style="left:82px;top:28px;font-size:23.600px;line-height:34px;font-weight:bold;color:#111;white-space:nowrap">对AI发展的保守估计</div>
<div class="hd" style="left:77px;top:91px;width:98px">2020年之前</div>
<div class="hd" style="left:178px;top:91px;width:99px">2020年</div>
<div class="hd" style="left:280px;top:91px;width:99px">2022年</div>
<div class="hd" style="left:382px;top:91px;width:99px">2025年?</div>
<div class="hd" style="left:484px;top:91px;width:99px">2030年?</div>
<div class="hd" style="left:586px;top:91px;width:98px">2050年?</div>
<div class="rl" style="top:118px">文本领域</div>
<div class="rl" style="top:183px">代码领域</div>
<div class="rl" style="top:236px">图像领域</div>
<div class="rl" style="top:288px">视频/3D/<br>游戏领域</div>
<div class="cell c0" style="left:77px;top:116px;width:98px;height:60px">诈骗垃圾信息识别<br>翻译<br>基础问答回应</div>
<div class="cell c2" style="left:178px;top:116px;width:99px;height:60px">基础文案撰写<br>初稿</div>
<div class="cell c2" style="left:280px;top:116px;width:99px;height:60px">更长的文本<br>二稿</div>
<div class="cell c3" style="left:382px;top:116px;width:99px;height:60px">垂直领域的文案<br>撰写实现可精调<br>（科学论文等）</div>
<div class="cell c3" style="left:484px;top:116px;width:99px;height:60px">终稿，水平高于人<br>类平均值</div>
<div class="cell c3" style="left:586px;top:116px;width:98px;height:60px">终稿，水平高于专<br>业写手</div>
<div class="cell c0" style="left:77px;top:181px;width:98px;height:49px">单行代码补足</div>
<div class="cell c2" style="left:178px;top:181px;width:99px;height:49px">多行代码生成</div>
<div class="cell c2" style="left:280px;top:181px;width:99px;height:49px">更长的代码<br>更精确的表达</div>
<div class="cell c3" style="left:382px;top:181px;width:99px;height:49px">支持更多语种<br>领域更垂直</div>
<div class="cell c3" style="left:484px;top:181px;width:99px;height:49px">根据文本生成初版<br>应用程序</div>
<div class="cell c3" style="left:586px;top:181px;width:98px;height:49px">根据文本生成终版<br>应用程序，比全职<br>开发者水平更高</div>
<div class="cell c0" style="left:77px;top:235px;width:98px;height:48px"></div>
<div class="cell c0" style="left:178px;top:235px;width:99px;height:48px"></div>
<div class="cell c2" style="left:280px;top:235px;width:99px;height:48px">艺术<br>图标<br>摄影</div>
<div class="cell c2" style="left:382px;top:235px;width:99px;height:48px">模仿（产品设计、<br>建筑等）</div>
<div class="cell c3" style="left:484px;top:235px;width:99px;height:48px">终稿（产品设计、<br>建筑等）</div>
<div class="cell c3" style="left:586px;top:235px;width:98px;height:48px">终稿，水平高于专<br>职艺术家、设计师<br>和摄影师</div>
<div class="cell c0" style="left:77px;top:288px;width:98px;height:49px"></div>
<div class="cell c0" style="left:178px;top:288px;width:99px;height:49px"></div>
<div class="cell c0" style="left:280px;top:288px;width:99px;height:49px"></div>
<div class="cell c2" style="left:382px;top:288px;width:99px;height:49px">视频和3D文件的<br>基础版/初稿</div>
<div class="cell c2" style="left:484px;top:288px;width:99px;height:49px">二稿</div>
<div class="cell c3" style="left:586px;top:288px;width:98px;height:49px">AI版Roblox<br>可依个人梦想定制<br>的游戏和电影</div>
<div class="abs" style="left:402px;top:344px;font-family:'Liberation Sans','Noto Serif CJK SC',serif;font-size:10.500px;line-height:14px;color:#333;white-space:nowrap;letter-spacing:.4px">大规模实现难度：</div>
<div class="abs" style="left:496px;top:345.5px;width:11px;height:11px;border-radius:50%;background:#c3c2d6"></div>
<div class="abs" style="left:510px;top:344px;font-family:'Liberation Sans','Noto Serif CJK SC',serif;font-size:10.500px;line-height:14px;color:#333;white-space:nowrap;letter-spacing:.4px">初级尝试</div>
<div class="abs" style="left:560px;top:345.5px;width:11px;height:11px;border-radius:50%;background:#7b79a8"></div>
<div class="abs" style="left:574px;top:344px;font-family:'Liberation Sans','Noto Serif CJK SC',serif;font-size:10.500px;line-height:14px;color:#333;white-space:nowrap;letter-spacing:.4px">接近成熟</div>
<div class="abs" style="left:628px;top:345.5px;width:11.5px;height:11.5px;border-radius:50%;background:#4a4874"></div>
<div class="abs" style="left:641px;top:344px;font-family:'Liberation Sans','Noto Serif CJK SC',serif;font-size:10.500px;line-height:14px;color:#333;white-space:nowrap;letter-spacing:.4px">成熟应用</div>
</div>
<div class="abs" style="left:765px;top:223px;width:15px;height:39px;background:#6c6c6a;border-radius:4px 0 0 4px"></div><svg class="abs" style="left:768px;top:234.500px" width="20" height="26" viewBox="0 0 20 26"><path d="M1.800 3.500l5.200 5-5.200 5" stroke="#d8d8d8" stroke-width="1.200" fill="none"/></svg>
</div>
<div class="abs" style="left:1px;top:563px;width:780px;height:21px;background:#2b2e32"></div>
<div class="abs" style="left:1px;top:562.500px;width:133px;height:21.500px;background:#0d0d0d;color:#fff;font-size:12.800px;line-height:21px;white-space:nowrap;display:flex;align-items:center;padding-left:2px"><svg width="15" height="15" viewBox="0 0 15 15" style="margin:0 5px 0 -1px"><rect x="0" y="0.500" width="15" height="10.500" rx="1.500" fill="#fff"/><rect x="3" y="12.500" width="9" height="2" rx=".5" fill="#fff"/><path d="M3.500 9c.5-3 2.500-4.500 5-4.500V2.500L12 6 8.500 9.500V7.500C6.500 7.500 5 7.800 3.500 9z" fill="#222"/></svg><svg width="14" height="16" viewBox="0 0 14 16" style="margin-right:5px;margin-left:0"><rect x="4" y="0.500" width="6" height="10" rx="3" fill="#5fe05a"/><path d="M1.500 7.500a5.500 5.500 0 0 0 11 0" stroke="#5fe05a" stroke-width="1.600" fill="none"/><path d="M7 13v2.500" stroke="#5fe05a" stroke-width="1.600"/></svg>古典的屏幕共享</div>
</body>
</html>
